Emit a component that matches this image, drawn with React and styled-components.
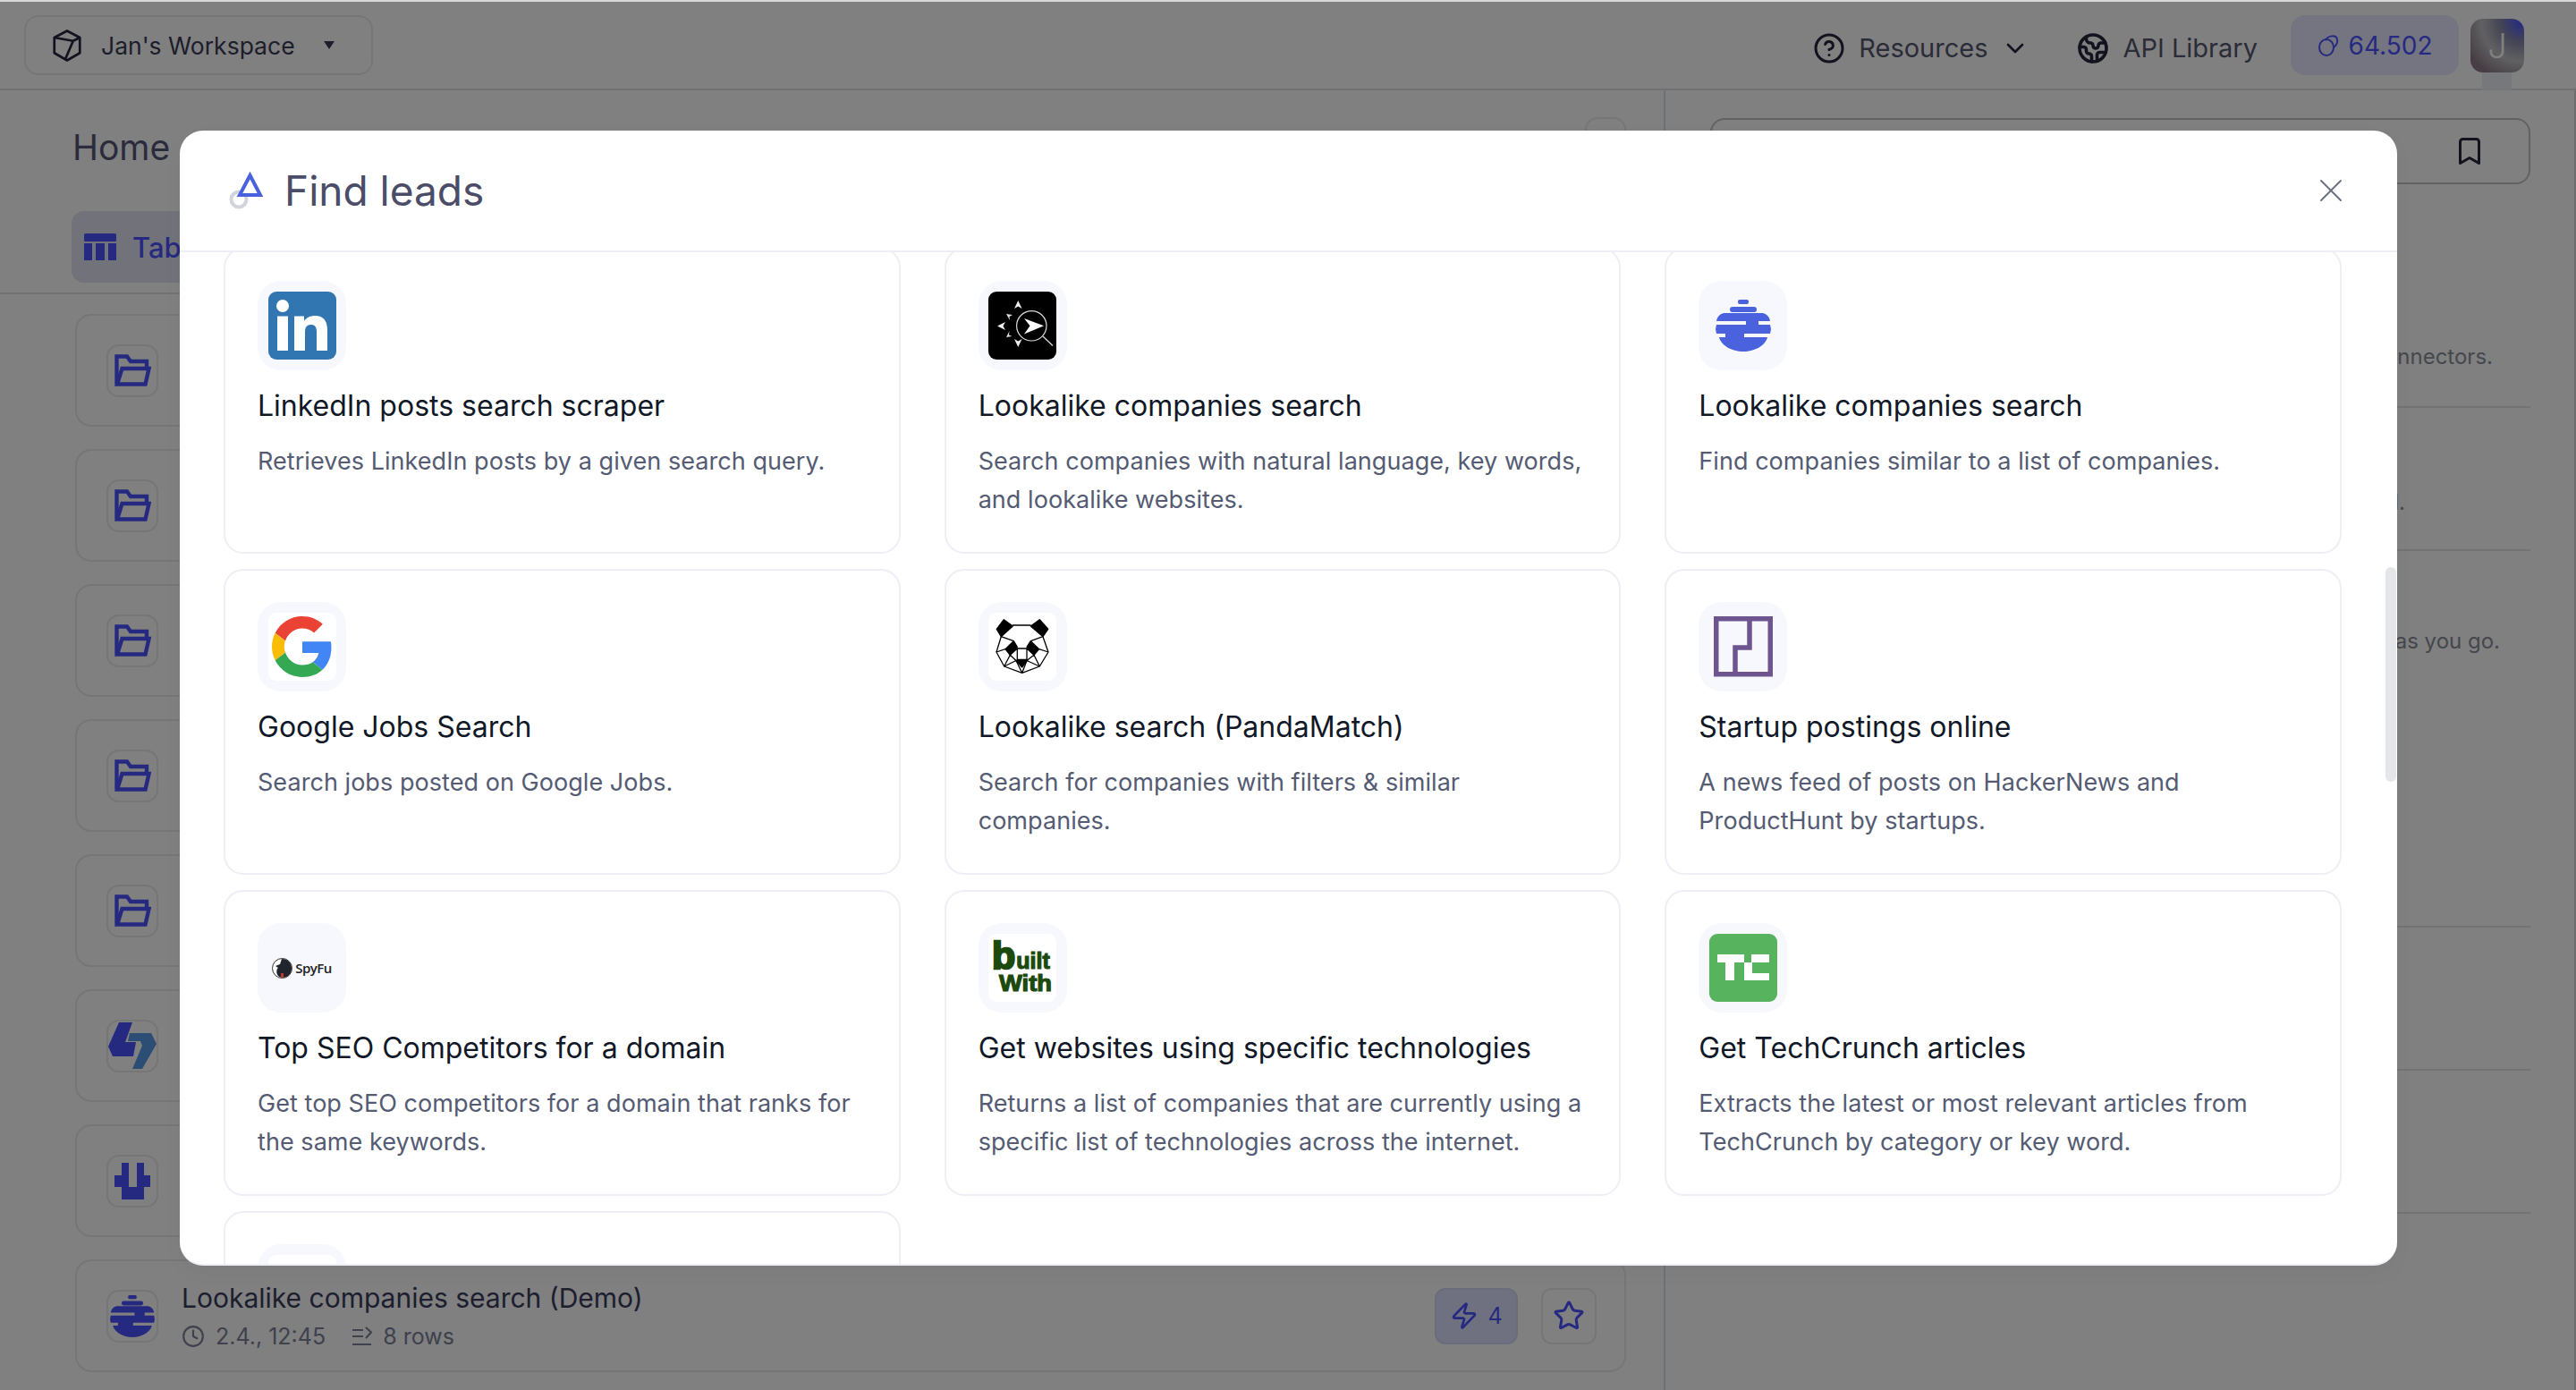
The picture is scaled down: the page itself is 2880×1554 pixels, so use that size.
import React from "react";
import styled, { createGlobalStyle } from "styled-components";
import { X, ChevronDown, CircleHelp, Earth, Bookmark, Clock, Zap, Star } from "lucide-react";

const Global = createGlobalStyle`
  html, body { margin: 0; padding: 0; background: #fff; }
  body { font-family: Inter, "Liberation Sans", sans-serif; overflow: hidden; }
  * { box-sizing: border-box; }
`;

const Page = styled.div`
  width: 2880px; height: 1554px; overflow: hidden; position: relative;
  display: flex; flex-direction: column; background: #fff; border-top: 2px solid #d9d9d9;
`;
const Header = styled.header`
  height: 99px; flex: none; display: flex; align-items: flex-start; justify-content: space-between;
  padding: 15px 58px 0 27px; border-bottom: 2px solid #e2e2e6;
`;
const WorkspaceButton = styled.div`
  width: 390px; height: 67px; display: flex; align-items: center; padding-left: 28px;
  border: 2px solid #ececf0; border-radius: 16px; color: #3a3d55; font-size: 26.5px;
`;
const WorkspaceName = styled.span` margin-left: 20px; `;
const Caret = styled.span`
  margin-left: 32px; width: 0; height: 0; border-left: 6px solid transparent; border-right: 6px solid transparent;
  border-top: 9px solid #3a3d55;
`;
const HeaderRight = styled.div` display: flex; align-items: center; height: 67px; `;
const NavLink = styled.div`
  display: flex; align-items: center; gap: 15px; color: #555870; font-size: 29px; margin-right: ${p => p.$mr}px;
  position: relative; top: 3px;
  svg { color: #24263c; }
`;
const Credits = styled.div`
  width: 188px; height: 67px; border-radius: 16px; background: #e7e9ff; color: #4a54ff;
  display: flex; align-items: center; justify-content: center; gap: 11px; font-size: 28px; margin-right: 13px;
`;
const Avatar = styled.div`
  width: 60px; height: 60px; border-radius: 14px; position: relative; color: #fff;
  display: flex; align-items: center; justify-content: center; font-size: 38px; font-weight: 300;
  background: radial-gradient(circle at 95% 5%, #4a54ff 0, #8a8aa8 30%, #c0c0c4 55%, #8c7c88 85%);
  &::after { content: ""; position: absolute; left: 13px; top: 60px; width: 33px; height: 20px; background: #eef0f6; }
`;
const Body = styled.div` flex: 1; display: flex; min-height: 0; `;
const LeftPanel = styled.section`
  width: 1862px; flex: none; border-right: 2px solid #dcdff0; display: flex; flex-direction: column;
`;
const HomeHead = styled.div`
  height: 135px; padding: 39px 42px 0 81px; display: flex; justify-content: space-between; align-items: flex-start;
`;
const HomeTitle = styled.h1` margin: 0; font-size: 39px; line-height: 50px; font-weight: 400; color: #55587a; `;
const GhostButton = styled.div` width: 46px; height: 60px; margin-top: -9px; border: 2px solid #ececf0; border-radius: 14px; `;
const TabBar = styled.div` height: 93px; padding: 0 0 0 80px; border-bottom: 2px solid #e6e6ea; flex: none; `;
const TabChip = styled.div`
  width: 200px; height: 80px; border-radius: 14px; background: #e2e3f4; color: #4a54ff; display: flex; align-items: center;
  gap: 18px; padding-left: 14px; font-size: 31px; font-weight: 500;
`;
const List = styled.div` padding: 22px 42px 0 84px; display: flex; flex-direction: column; gap: 25px; `;
const ListRow = styled.div`
  height: 126px; flex: none; border: 2px solid #ebebee; border-radius: 18px; display: flex; align-items: center; padding: 0 31px 0 33px;
`;
const RowTile = styled.div`
  width: 58px; height: 59px; flex: none; border: 2px solid #ebebee; border-radius: 14px; background: #fff;
  display: flex; align-items: center; justify-content: center; color: #4a54ff; margin-right: 26px;
`;
const RowText = styled.div` flex: 1; display: flex; flex-direction: column; gap: 8px; `;
const RowTitle = styled.div` font-size: 30px; line-height: 38px; color: #3a3d5c; `;
const RowMeta = styled.div` display: flex; align-items: center; gap: 29px; font-size: 25px; line-height: 32px; color: #7e8199; `;
const MetaItem = styled.span` display: flex; align-items: center; gap: 12px; `;
const Runs = styled.div`
  width: 93px; height: 63px; border-radius: 12px; background: #e0e2ff; border: 2px solid #d4d7f5; color: #4a54ff;
  display: flex; align-items: center; justify-content: center; gap: 10px; font-size: 25px; margin-right: 26px;
`;
const StarButton = styled.div`
  width: 62px; height: 63px; border-radius: 12px; border: 2px solid #ebebee; color: #4a54ff;
  display: flex; align-items: center; justify-content: center;
`;
const RightPanel = styled.aside` flex: 1; padding: 31px 49px 0 50px; display: flex; flex-direction: column; border-right: 2px solid #d9d9d9; `;
const SearchBox = styled.div`
  height: 74px; flex: none; border: 2px solid #c4c4c6; border-radius: 16px; display: flex; align-items: center; justify-content: flex-end;
  padding-right: 48px; color: #24263c;
`;
const Tip = styled.div`
  height: ${p => p.$h}px; flex: none; border-bottom: 2px solid #e6e6ea; display: flex; align-items: flex-end; justify-content: flex-end;
  padding: 0 ${p => p.$right}px ${p => p.$bottom}px 0; font-size: 24px; line-height: 34px; color: #8a8e9a; white-space: nowrap;
`;

const Overlay = styled.div`
  position: absolute; inset: 0; background: rgba(0, 0, 0, .498); padding: 144px 200px 139px 201px; display: flex;
`;
const Modal = styled.div`
  flex: 1; background: #fff; border-radius: 26px; display: flex; flex-direction: column; overflow: hidden; position: relative;
  box-shadow: 0 8px 24px rgba(0,0,0,.03); border-bottom: 2px solid #eeeef5;
`;
const ModalHead = styled.div`
  height: 136px; flex: none; border-bottom: 2px solid #eeeef6; display: flex; align-items: center; justify-content: space-between;
  padding: 0 52px 0 55px;
`;
const ModalTitleWrap = styled.div` display: flex; align-items: center; gap: 22px; `;
const ModalTitle = styled.h2` margin: 0; font-size: 46px; line-height: 56px; font-weight: 400; color: #4a4c68; `;
const CloseBtn = styled.div` color: #6b7280; display: flex; `;
const Scroll = styled.div` flex: 1; min-height: 0; overflow: hidden; position: relative; padding: 0 62px 0 49px; `;
const Grid = styled.div`
  display: grid; grid-template-columns: repeat(3, 1fr); column-gap: 49px; row-gap: 17px; margin-top: -5px;
`;
const Card = styled.article`
  height: 342px; border: 2px solid #eeeef6; border-radius: 22px; padding: 35px 36px 0; background: #fff;
`;
const Tile = styled.div`
  width: 99px; height: 100px; border-radius: 26px; background: #f7f8fd; display: flex; align-items: center; justify-content: center;
`;
const LogoBox = styled.div`
  width: 76px; height: 76px; border-radius: 9px; overflow: hidden; background: ${p => p.$bg || "#fff"};
  display: flex; align-items: center; justify-content: center;
  svg { display: block; flex: none; }
`;
const CardTitle = styled.h3` margin: 18px 0 0; font-size: 32px; line-height: 44px; font-weight: 400; color: #111827; `;
const CardDesc = styled.p` margin: 18px 0 0; font-size: 27px; line-height: 43px; color: #545b72; letter-spacing: .05px; `;
const ScrollThumb = styled.div`
  position: absolute; right: 1px; top: 352px; width: 12px; height: 240px; border-radius: 6px; background: #e4e6ea;
`;
const SpyMark = styled.div` display: flex; align-items: center; gap: 3px; `;
const SpyText = styled.span` font-size: 15px; font-weight: 600; letter-spacing: -0.5px; color: #222; font-family: "Open Sans", sans-serif; `;

const Cube = () => (
  <svg width="36" height="38" viewBox="0 0 24 25" fill="none" stroke="#24263c" strokeWidth="1.8" strokeLinejoin="round">
    <path d="M12 1.5 21.5 6.5 V18 L12 23.5 2.5 18 V6.5 Z" /><path d="M2.5 6.5 L16.5 9 L21.5 6.5 M16.5 9 L10.5 23" />
  </svg>
);
const Coin = () => (
  <svg width="24" height="26" viewBox="0 0 24 26" fill="none" stroke="#4a54ff" strokeWidth="2">
    <ellipse cx="10" cy="15" rx="8" ry="9" /><path d="M9 7 C12 1 21 1 22 6 C23 10 20 14 18 15" />
  </svg>
);
const TableIcon = () => (
  <svg width="36" height="30" viewBox="0 0 36 30" fill="#4a54ff">
    <rect width="36" height="9" rx="1.5" /><rect y="11" width="9" height="19" /><rect x="13" y="11" width="10" height="19" /><rect x="27" y="11" width="9" height="19" />
  </svg>
);
const RowsIcon = () => (
  <svg width="23" height="24" viewBox="0 0 23 24" fill="none" stroke="#7e8199" strokeWidth="2.2">
    <path d="M1 5 H13 M1 12 H13 M1 21 H22 M16 2 L22 7.5 L16 14" />
  </svg>
);
const FolderIcon = () => (
  <svg width="41" height="36" viewBox="0 0 41 36" fill="none" stroke="#4a54ff" strokeWidth="4.4" strokeLinejoin="miter">
    <path d="M2.5 33.5 V2.5 H14 L18 8 H36 V16" /><path d="M3 33.5 L8.5 16 H38.5 L34.5 33.5 Z" />
  </svg>
);
const TitleMark = () => (
  <svg width="40" height="42" viewBox="0 0 40 42" fill="none">
    <circle cx="11" cy="31" r="8.5" stroke="#d1d5db" strokeWidth="4" />
    <path d="M23.5 4 L35 26 H12 Z" fill="#fff" stroke="#4a62dd" strokeWidth="4" strokeLinejoin="miter" />
  </svg>
);
const LinkedIn = () => (
  <svg width="76" height="76" viewBox="0 0 76 76" fill="#fff">
    <circle cx="16" cy="16" r="7" /><rect x="10" y="27.5" width="12" height="38.5" />
    <path d="M29 27.5 H40 V33 C42.5 29 47 27 52 27 C62 27 66 33 66 43 V66 H54 V45 C54 39.5 52 37 47.5 37 C43 37 41 40 41 45 V66 H29 Z" />
  </svg>
);
const Compass = () => (
  <svg width="76" height="76" viewBox="0 0 76 76">
    <circle cx="48.3" cy="38.3" r="16.7" fill="none" stroke="#d8d8d8" strokeWidth="1.2" />
    <path d="M61 50 L72 60.5" stroke="#d8d8d8" strokeWidth="1.3" />
    <path d="M40 30 L62 38.3 L40 47.5 L46.5 38.3 Z" fill="#fff" />
    <path d="M33.3 10 L37.5 19 L33.3 16.5 L29 19 Z M33.3 62 L37.5 53 L33.3 55.5 L29 53 Z M10 38.5 L19 34 L16.5 38.5 L19 43 Z" fill="#eee" />
    <path d="M20 25 L27 26 L23.5 28 L24 32 Z M20 51 L26.5 50 L23 48.5 L23.5 44 Z" fill="#ddd" />
  </svg>
);
const Hive = ({ w = 62, h = 58, color = "#4a62dd" }) => (
  <svg width={w} height={h} viewBox="0 0 62 58" fill={color}>
    <rect x="25" y="0" width="12" height="5" rx="2" /><rect x="16" y="8" width="30" height="6" rx="3" />
    <path d="M9 15 H53 Q60 17 61 24 H1 Q2 17 9 15 Z" />
    <rect x="34" y="23" width="14" height="6" />
    <path d="M1 28 H61 L62 33 L61 38 H1 L0 33 Z" />
    <rect x="11" y="37" width="21" height="6" />
    <path d="M4 42 H58 C56 51 44 58 31 58 C18 58 6 51 4 42 Z" />
  </svg>
);
const Panda = () => (
  <svg width="76" height="76" viewBox="0 0 76 76" fill="none" stroke="#000" strokeWidth="1.3" strokeLinejoin="round">
    <path d="M17.3 7.7 27.3 15 14.3 26.7 9.3 18.3Z M57.3 7.7 47.3 15 61 26.7 66.7 18.3Z M28.3 31.7 32.3 38.3 24.3 47.3 19 40.7Z M47.3 31.7 43 38.3 51 47.3 56.7 40.7Z M31 53.5 43 53.5 37.7 61Z" fill="#000" />
    <path d="M27 14 H47.5 M14.3 26.7 L9 44 L17.7 60 L37.7 67.3 L57.3 60 L67 44 L61 26.7 M14.3 26.7 L28.3 31.7 M61 26.7 L47.3 31.7 M9 44 L19 40.7 M67 44 L56.7 40.7 M32.3 40 H43 V52.5 H32.3 Z M32.3 40 L24.3 47.3 L17.7 60 L31 53.5 L37.7 67.3 L43 53.5 L57.3 60 L51 47.3 L43 40 M24.3 47.3 L31 53.5 M51 47.3 L43 53.5" />
  </svg>
);
const Startup = () => (
  <svg width="66" height="68" viewBox="0 0 66 68" fill="none" stroke="#6f5590" strokeWidth="5.5">
    <rect x="2.75" y="2.75" width="60.5" height="62" /><path d="M40 3 V35 H24 V65" />
  </svg>
);
const SpyFu = () => (
  <SpyMark>
    <svg width="23" height="23" viewBox="0 0 23 23">
      <circle cx="11.5" cy="11.5" r="11" fill="#fff" stroke="#333" strokeWidth="1" />
      <path d="M11 1 C18 1 22 6 22 11.5 C22 18 17 22 12 22 L8 21 C4 17 5 13 7 11 L4 9 L9 7 Z" fill="#20242c" />
      <rect x="10" y="17" width="3" height="5" fill="#c0392b" />
    </svg>
    <SpyText>SpyFu</SpyText>
  </SpyMark>
);
const BuiltWith = () => (
  <svg width="76" height="76" viewBox="0 0 76 76" fill="#1c4a0e" stroke="#1c4a0e" fontFamily="'Liberation Sans', sans-serif" fontWeight="700">
    <text x="4" y="39" strokeWidth="1.2">
      <tspan fontSize="43" strokeWidth="2.4">b</tspan><tspan fontSize="25" dx="1">uilt</tspan>
    </text>
    <text x="12" y="64" fontSize="26" strokeWidth="1.2" textLength="59" lengthAdjust="spacingAndGlyphs">With</text>
  </svg>
);
const TechCrunch = () => (
  <svg width="76" height="76" viewBox="0 0 76 76" fill="#fff">
    <rect x="9" y="23" width="30" height="9" /><rect x="18" y="23" width="10" height="29" />
    <rect x="47" y="23" width="20" height="9" /><rect x="39" y="32" width="9" height="20" /><rect x="39" y="44" width="28" height="8" />
  </svg>
);
const ArrowsLogo = () => (
  <svg width="54" height="52" viewBox="0 0 54 52">
    <path d="M12 0 H27 L19 22 H31 L28 38 H5 L0 27 Z" fill="#4a54ff" /><path d="M24 12 H48 L54 24 L38 52 H27 L38 26 L36 21 H22 Z" fill="#5a9be8" />
  </svg>
);
const UMark = () => (
  <svg width="40" height="41" viewBox="0 0 40 41" fill="#4a54ff">
    <path d="M8 0 H16 V27 H25 V0 H33 V14 H40 V27 H33 V41 H8 V27 H0 V14 H8 Z" />
  </svg>
);
const GoogleG = () => (
  <svg width="68" height="68" viewBox="0 0 48 48">
    <path fill="#EA4335" d="M24 9.5c3.5 0 6.7 1.2 9.2 3.6l6.9-6.9C35.9 2.4 30.5 0 24 0 14.6 0 6.5 5.4 2.6 13.2l8 6.2C12.5 13.7 17.8 9.5 24 9.5z"/>
    <path fill="#4285F4" d="M46.9 24.5c0-1.6-.1-3.1-.4-4.5H24v9h12.9c-.6 3-2.2 5.5-4.7 7.2l7.7 6c4.5-4.2 7-10.3 7-17.7z"/>
    <path fill="#FBBC05" d="M10.5 28.6c-.5-1.4-.8-3-.8-4.6s.3-3.2.8-4.6l-8-6.2C.9 16.5 0 20.1 0 24s.9 7.5 2.6 10.8l7.9-6.2z"/>
    <path fill="#34A853" d="M24 48c6.5 0 11.9-2.1 15.9-5.8l-7.7-6c-2.2 1.5-5 2.3-8.2 2.3-6.2 0-11.5-4.2-13.4-9.9l-8 6.2C6.5 42.6 14.6 48 24 48z"/>
  </svg>
);

const cards = [
  { logo: <LogoBox $bg="#3176b1"><LinkedIn /></LogoBox>, title: "LinkedIn posts search scraper", desc: "Retrieves LinkedIn posts by a given search query." },
  { logo: <LogoBox $bg="#000"><Compass /></LogoBox>, title: "Lookalike companies search", desc: "Search companies with natural language, key words, and lookalike websites." },
  { logo: <LogoBox $bg="transparent"><Hive /></LogoBox>, title: "Lookalike companies search", desc: "Find companies similar to a list of companies." },
  { logo: <LogoBox $bg="#fff"><GoogleG /></LogoBox>, title: "Google Jobs Search", desc: "Search jobs posted on Google Jobs." },
  { logo: <LogoBox><Panda /></LogoBox>, title: "Lookalike search (PandaMatch)", desc: "Search for companies with filters & similar companies." },
  { logo: <LogoBox $bg="transparent"><Startup /></LogoBox>, title: "Startup postings online", desc: "A news feed of posts on HackerNews and ProductHunt by startups." },
  { logo: <LogoBox $bg="transparent"><SpyFu /></LogoBox>, title: "Top SEO Competitors for a domain", desc: "Get top SEO competitors for a domain that ranks for the same keywords." },
  { logo: <LogoBox><BuiltWith /></LogoBox>, title: "Get websites using specific technologies", desc: "Returns a list of companies that are currently using a specific list of technologies across the internet." },
  { logo: <LogoBox $bg="#57b35e"><TechCrunch /></LogoBox>, title: "Get TechCrunch articles", desc: "Extracts the latest or most relevant articles from TechCrunch by category or key word." },
  { logo: <LogoBox />, title: "", desc: "" },
];

const leftRows = [<FolderIcon />, <FolderIcon />, <FolderIcon />, <FolderIcon />, <FolderIcon />, <ArrowsLogo />, <UMark />];

export default function App() {
  return (
    <Page>
      <Global />
      <Header>
        <WorkspaceButton><Cube /><WorkspaceName>Jan's Workspace</WorkspaceName><Caret /></WorkspaceButton>
        <HeaderRight>
          <NavLink $mr={53}><CircleHelp size={36} strokeWidth={2} />Resources<ChevronDown size={32} strokeWidth={2} /></NavLink>
          <NavLink $mr={37}><Earth size={36} strokeWidth={2.4} />API Library</NavLink>
          <Credits><Coin />64.502</Credits>
          <Avatar>J</Avatar>
        </HeaderRight>
      </Header>
      <Body>
        <LeftPanel>
          <HomeHead><HomeTitle>Home</HomeTitle><GhostButton /></HomeHead>
          <TabBar><TabChip><TableIcon />Table</TabChip></TabBar>
          <List>
            {leftRows.map((icon, i) => <ListRow key={i}><RowTile>{icon}</RowTile></ListRow>)}
            <ListRow>
              <RowTile><Hive w={50} h={47} color="#4a54ff" /></RowTile>
              <RowText>
                <RowTitle>Lookalike companies search (Demo)</RowTitle>
                <RowMeta>
                  <MetaItem><Clock size={26} strokeWidth={2} />2.4., 12:45</MetaItem>
                  <MetaItem><RowsIcon />8 rows</MetaItem>
                </RowMeta>
              </RowText>
              <Runs><Zap size={32} strokeWidth={2} />4</Runs>
              <StarButton><Star size={36} strokeWidth={2} /></StarButton>
            </ListRow>
          </List>
        </LeftPanel>
        <RightPanel>
          <SearchBox><Bookmark size={36} strokeWidth={2} /></SearchBox>
          <Tip $h={250} $right={42} $bottom={38}>Enrich your data with connectors.</Tip>
          <Tip $h={160} $right={140} $bottom={35}>Run your own search and build.</Tip>
          <Tip $h={421} $right={34} $bottom={301}>Only pay for what you use as you go.</Tip>
          <Tip $h={160} $right={0} $bottom={0} />
          <Tip $h={160} $right={0} $bottom={0} />
        </RightPanel>
      </Body>
      <Overlay>
        <Modal>
          <ModalHead>
            <ModalTitleWrap><TitleMark /><ModalTitle>Find leads</ModalTitle></ModalTitleWrap>
            <CloseBtn><X size={44} strokeWidth={1.1} /></CloseBtn>
          </ModalHead>
          <Scroll>
            <Grid>
              {cards.map((c, i) => (
                <Card key={i}>
                  <Tile>{c.logo}</Tile>
                  {c.title && <CardTitle>{c.title}</CardTitle>}
                  {c.desc && <CardDesc>{c.desc}</CardDesc>}
                </Card>
              ))}
            </Grid>
            <ScrollThumb />
          </Scroll>
        </Modal>
      </Overlay>
    </Page>
  );
}
